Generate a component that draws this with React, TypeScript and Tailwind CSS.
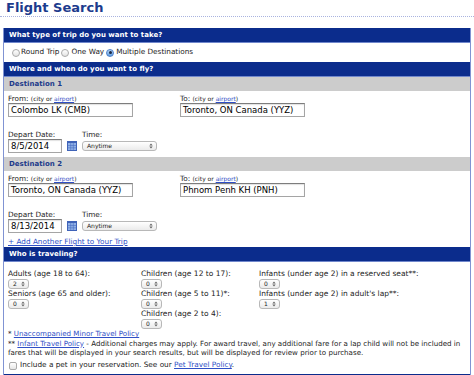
import React from "react";

const Arrows = () => (
  <svg width="4" height="6" viewBox="0 0 4 6" className="shrink-0">
    <path d="M0.3 2.4L2 0.6L3.7 2.4Z M0.3 3.6L2 5.4L3.7 3.6Z" fill="#666" />
  </svg>
);

function Sel({ value, className }: { value: string; className: string }) {
  return (
    <div
      className={`h-[10px] rounded-[3px] border border-[#b8b8b8] bg-gradient-to-b from-white to-[#ebebeb] flex items-center justify-between pl-[4px] pr-[3px] text-[6px] leading-none text-[#222] ${className}`}
    >
      <span>{value}</span>
      <Arrows />
    </div>
  );
}

function Inp({ value, className }: { value: string; className: string }) {
  return (
    <div
      className={`h-[14px] border border-[#a5a5a5] border-t-[#7d7d7d] bg-white shadow-[inset_0_1px_1px_rgba(0,0,0,0.12)] pl-[2px] text-[8.5px] leading-[12px] text-black whitespace-nowrap overflow-hidden ${className}`}
    >
      {value}
    </div>
  );
}

function Radio({ checked }: { checked?: boolean }) {
  return (
    <span
      className={`w-[8px] h-[8px] rounded-full border flex items-center justify-center shrink-0 ${
        checked
          ? "border-[#4d7fca] bg-gradient-to-b from-[#b7d6f6] to-[#5f9de0]"
          : "border-[#a9a9a9] bg-gradient-to-b from-white to-[#e3e3e3]"
      }`}
    >
      {checked && <span className="w-[3px] h-[3px] rounded-full bg-[#1b2742]" />}
    </span>
  );
}

function Bar({ children }: { children: React.ReactNode }) {
  return (
    <div className="h-[15px] bg-[#0b2c8c] border-b border-[#7087cc] pl-[5px] text-white font-bold text-[7px] leading-[14px]">
      {children}
    </div>
  );
}

function Grey({ children }: { children: React.ReactNode }) {
  return (
    <div className="h-[14px] bg-[#cccccc] pl-[5px] text-[#1d3a8a] font-bold text-[7px] leading-[14px]">
      {children}
    </div>
  );
}

const Link = ({ children }: { children: React.ReactNode }) => (
  <span className="text-[#2f4fc6] underline">{children}</span>
);

function Cal() {
  return (
    <svg width="10" height="10" viewBox="0 0 10 10" className="shrink-0">
      <rect x="0" y="0" width="10" height="10" fill="#3f63b8" />
      <rect x="1" y="2" width="8" height="7" fill="#8fb0e6" />
      <path d="M1 4.5H9M1 6.8H9M3.7 2V9M6.3 2V9" stroke="#4a6fc2" strokeWidth="0.6" />
    </svg>
  );
}

function Dest({
  from,
  to,
  date,
}: {
  from: string;
  to: string;
  date: string;
}) {
  return (
    <div className="pt-[4px] pb-[4px] pl-[4px] flex flex-col">
      <div className="grid grid-cols-[172px_1fr]">
        <div className="flex flex-col">
          <div className="h-[8px] text-[7.3px] leading-[8px] text-[#222] whitespace-nowrap">
            From: <span className="text-[6px]">(city or <Link>airport</Link>)</span>
          </div>
          <Inp value={from} className="w-[125px]" />
        </div>
        <div className="flex flex-col">
          <div className="h-[8px] text-[7.3px] leading-[8px] text-[#222] whitespace-nowrap">
            To: <span className="text-[6px]">(city or <Link>airport</Link>)</span>
          </div>
          <Inp value={to} className="w-[125px]" />
        </div>
      </div>
      <div className="mt-[14px] flex">
        <div className="flex flex-col w-[74px]">
          <div className="h-[8px] text-[7.3px] leading-[8px] text-[#222]">Depart Date:</div>
          <div className="flex items-center gap-[5px]">
            <Inp value={date} className="w-[54px]" />
            <Cal />
          </div>
        </div>
        <div className="flex flex-col">
          <div className="h-[8px] text-[7.3px] leading-[8px] text-[#222]">Time:</div>
          <div className="h-[14px] flex items-center">
            <Sel value="Anytime" className="w-[75px]" />
          </div>
        </div>
      </div>
    </div>
  );
}

function PField({ label, value }: { label: string; value: string }) {
  return (
    <div className="flex flex-col">
      <div className="h-[10px] text-[7.5px] leading-[10px] text-[#222] whitespace-nowrap">{label}</div>
      <div className="h-[10px] flex items-center">
        <Sel value={value} className="w-[21px]" />
      </div>
    </div>
  );
}

export default function App() {
  return (
    <div className="w-[474px] h-[375px] overflow-hidden bg-white font-['DejaVu_Sans',Verdana,sans-serif]">
      <div className="h-[17px] border-b border-dotted border-[#a9b3df] pl-[6px] pt-[1px] text-[13px] leading-[14px] font-bold text-[#1c3b8d]">
        Flight Search
      </div>
      <div className="mt-[11px] mx-[3px] border-l border-r border-[#8093d3] flex flex-col">
        <Bar>What type of trip do you want to take?</Bar>
        <div className="h-[19px] flex items-center pl-[8px] text-[7.3px] text-[#222]">
          <Radio />
          <span className="ml-[1px] mr-[2px]">Round Trip</span>
          <Radio />
          <span className="ml-[2px] mr-[2px]">One Way</span>
          <Radio checked />
          <span className="ml-[2px]">Multiple Destinations</span>
        </div>
        <Bar>Where and when do you want to fly?</Bar>
        <Grey>Destination 1</Grey>
        <Dest from="Colombo LK (CMB)" to="Toronto, ON Canada (YYZ)" date="8/5/2014" />
        <Grey>Destination 2</Grey>
        <Dest from="Toronto, ON Canada (YYZ)" to="Phnom Penh KH (PNH)" date="8/13/2014" />
        <div className="h-[10px] pl-[4px] text-[7.3px] leading-[10px]">
          <Link>+ Add Another Flight to Your Trip</Link>
        </div>
        <Bar>Who is traveling?</Bar>
        <div className="pl-[4px] pt-[7px] grid grid-cols-[133px_118px_1fr]">
          <div className="flex flex-col">
            <PField label="Adults (age 18 to 64):" value="2" />
            <PField label="Seniors (age 65 and older):" value="0" />
          </div>
          <div className="flex flex-col">
            <PField label="Children (age 12 to 17):" value="0" />
            <PField label="Children (age 5 to 11)*:" value="0" />
            <PField label="Children (age 2 to 4):" value="0" />
          </div>
          <div className="flex flex-col">
            <PField label="Infants (under age 2) in a reserved seat**:" value="0" />
            <PField label="Infants (under age 2) in adult's lap**:" value="1" />
          </div>
        </div>
        <div className="pl-[4px] text-[7.1px] leading-[9.5px] text-[#222] whitespace-nowrap">
          <div>
            * <Link>Unaccompanied Minor Travel Policy</Link>
          </div>
          <div>
            ** <Link>Infant Travel Policy</Link> - Additional charges may apply. For award travel, any additional fare
            for a lap child will not be included in
          </div>
          <div>fares that will be displayed in your search results, but will be displayed for review prior to purchase.</div>
        </div>
        <div className="mt-[3px] h-[10px] pl-[5px] flex items-center gap-[3px] text-[7.3px] text-[#222]">
          <span className="w-[8px] h-[8px] rounded-[2px] border border-[#aaa] bg-gradient-to-b from-white to-[#e6e6e6] shrink-0" />
          <span>
            Include a pet in your reservation. See our <Link>Pet Travel Policy</Link>.
          </span>
        </div>
        <div className="mt-[3px] h-[10px] bg-[#0b2c8c]" />
      </div>
    </div>
  );
}
